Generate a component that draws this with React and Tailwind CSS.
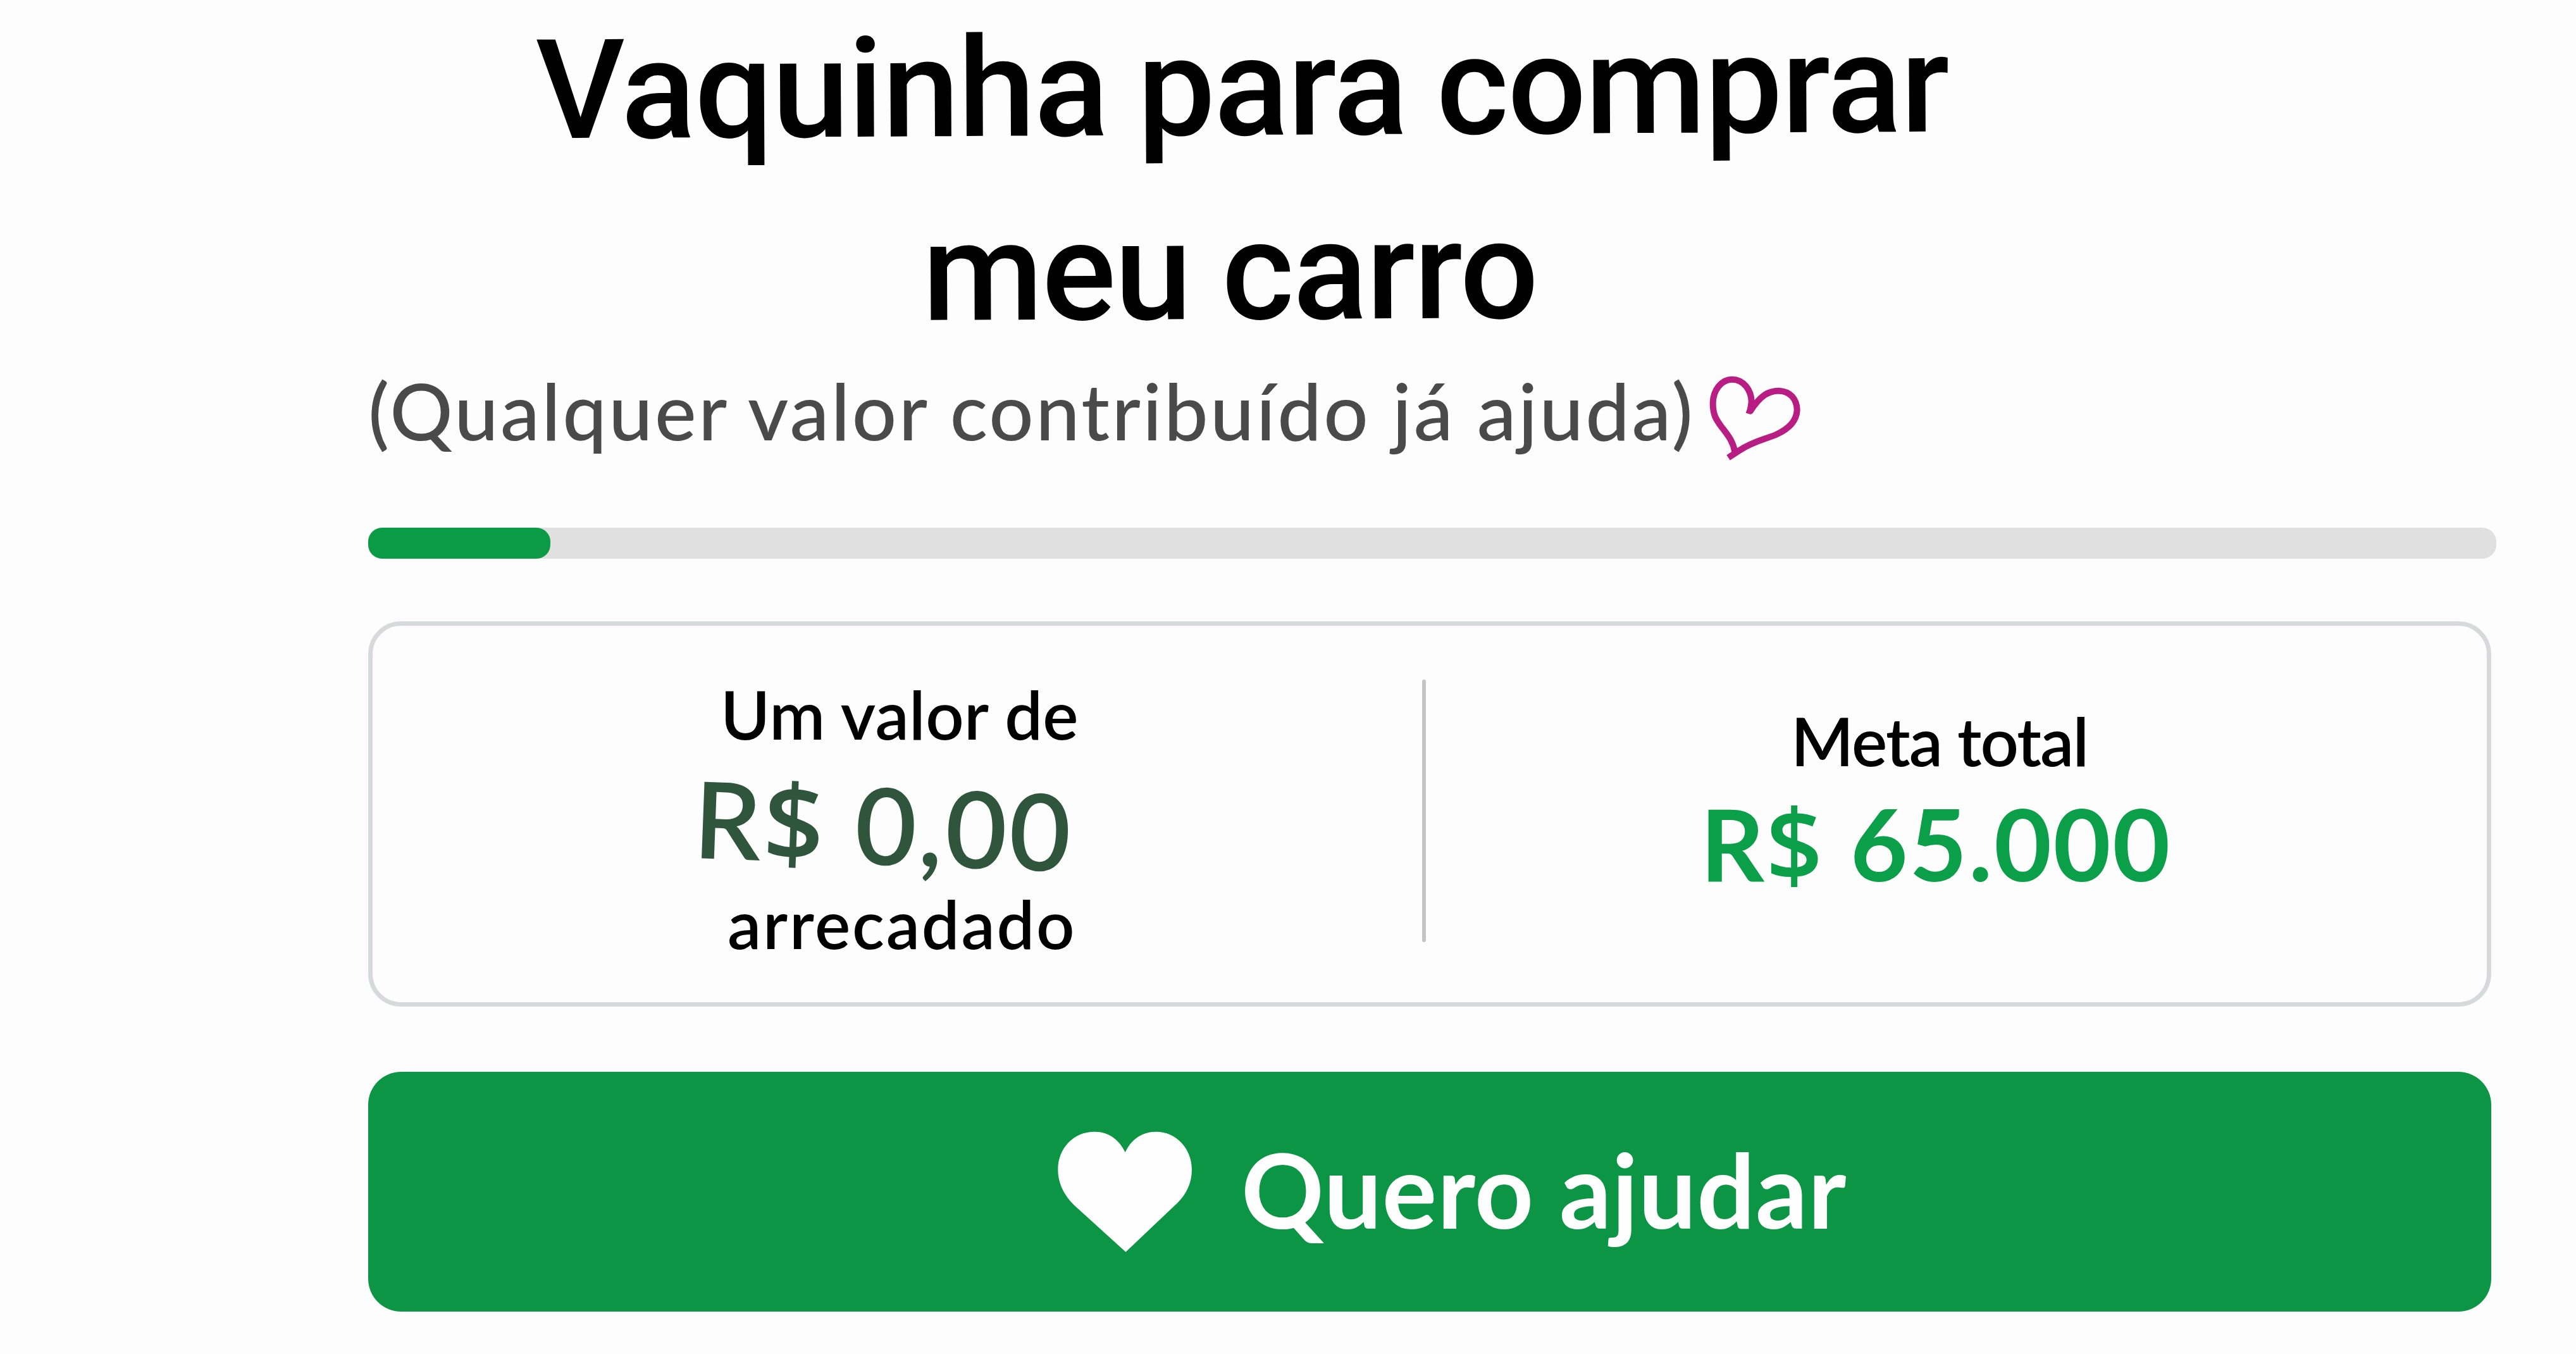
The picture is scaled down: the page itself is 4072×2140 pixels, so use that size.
import clsx from 'clsx'

const raised = '0,00'
const goal = '65.000'
const progress = 8.56

// Hand drawn outline heart beside the subtitle
function SketchHeart() {
  return (
    <svg viewBox="240 96 450 411" className="w-[150px] h-[137px]" fill="none" stroke="#b81d84" strokeWidth="30" strokeLinejoin="round">
      <path d="M367 462C358 412 336 386 304 344C277 308 263 286 263 232C264 166 306 119 354 119C408 119 446 170 446 226L441 262" />
      <path d="M424 263L441 269C484 200 526 172 576 173C630 175 661 213 662 264C660 318 620 355 562 381C510 403 456 412 388 456L336 490" />
    </svg>
  )
}

function SolidHeart() {
  return (
    <svg viewBox="155 82 640 574" className="w-[213px] h-[191px]" fill="#fefefe">
      <path d="M476 182C447 122 397 84 330 84C230 84 156 162 156 264C156 332 188 388 232 432L478 655L722 424C764 384 792 330 792 264C792 162 716 84 622 84C556 84 502 122 476 182Z" />
    </svg>
  )
}

function Label({ children, className }) {
  return (
    <p className={clsx('font-semibold text-[106px] leading-[120px] text-black whitespace-nowrap', className)}>
      {children}
    </p>
  )
}

function Money({ children, className }) {
  return (
    <p className={clsx('w-fit whitespace-nowrap', className)}>
      R<span className="font-semibold font-['Open_Sans',sans-serif]">$</span> {children}
    </p>
  )
}

function App() {
  return (
    <main className="w-[4072px] h-[2140px] overflow-hidden bg-[#fdfdfd] pl-[582px] pt-[3px] font-['Lato',sans-serif]">

      {/* Title */}
      <h1 className="font-['Roboto',sans-serif] font-medium text-[219px] leading-[270px] tracking-[-2px] text-black whitespace-nowrap">
        <span className="block w-fit ml-[265px] tracking-[-1.7px] [word-spacing:-6px] rotate-[-0.27deg]">Vaquinha para comprar</span>
        <span className="block w-fit ml-[876px] mt-[21px] [word-spacing:-3px] rotate-[-0.2deg]">meu carro</span>
      </h1>

      {/* Subtitle */}
      <div className="flex items-start mt-[4px]">
        <p className="w-[2118px] font-medium text-[124px] leading-[160px] tracking-[3.4px] text-[#4a4a4a] whitespace-nowrap">
          (Qualquer valor contribuído já ajuda)
        </p>
        <div className="pt-6">
          <SketchHeart />
        </div>
      </div>

      {/* Progress bar */}
      <div className="w-[3364px] h-[49px] mt-[105px] rounded-[22px] bg-[#e0e0e0]">
        <div className="h-[49px] rounded-[22px] bg-[#0b9a46]" style={{ width: `${progress}%` }} />
      </div>

      {/* Totals card */}
      <section className="flex w-[3356px] h-[609px] mt-[99px] rounded-[52px] border-[7px] border-[#d7dada]">
        <div className="w-[1659px] pt-[79px]">
          <Label className="ml-[550px] tracking-[0.4px]">Um valor de</Label>
          <Money className="ml-[508px] mt-[19px] font-semibold text-[168px] leading-[190px] tracking-[3.4px] text-[#30553d] rotate-[2.1deg]">{raised}</Money>
          <Label className="ml-[561px] mt-[2px] tracking-[2.8px]">arrecadado</Label>
        </div>
        <div className="w-[6px] h-[415px] mt-[85px] rounded-full bg-[#c4c4c4]" />
        <div className="pt-[121px]">
          <Label className="ml-[577px] tracking-[-1.8px]">Meta total</Label>
          <Money className="ml-[434px] mt-[22px] font-bold text-[157px] leading-[160px] tracking-[2.6px] text-[#0a9f48]">{goal}</Money>
        </div>
      </section>

      {/* Call to action */}
      <button className="flex items-center w-[3356px] h-[379px] mt-[103px] pl-[1090px] rounded-[52px] bg-[#0b9544]">
        <SolidHeart />
        <span className="ml-[77px] pb-2 font-bold text-[162px] leading-[200px] tracking-[0.8px] text-[#fefefe] whitespace-nowrap">Quero ajudar</span>
      </button>

    </main>
  )
}

export default App
